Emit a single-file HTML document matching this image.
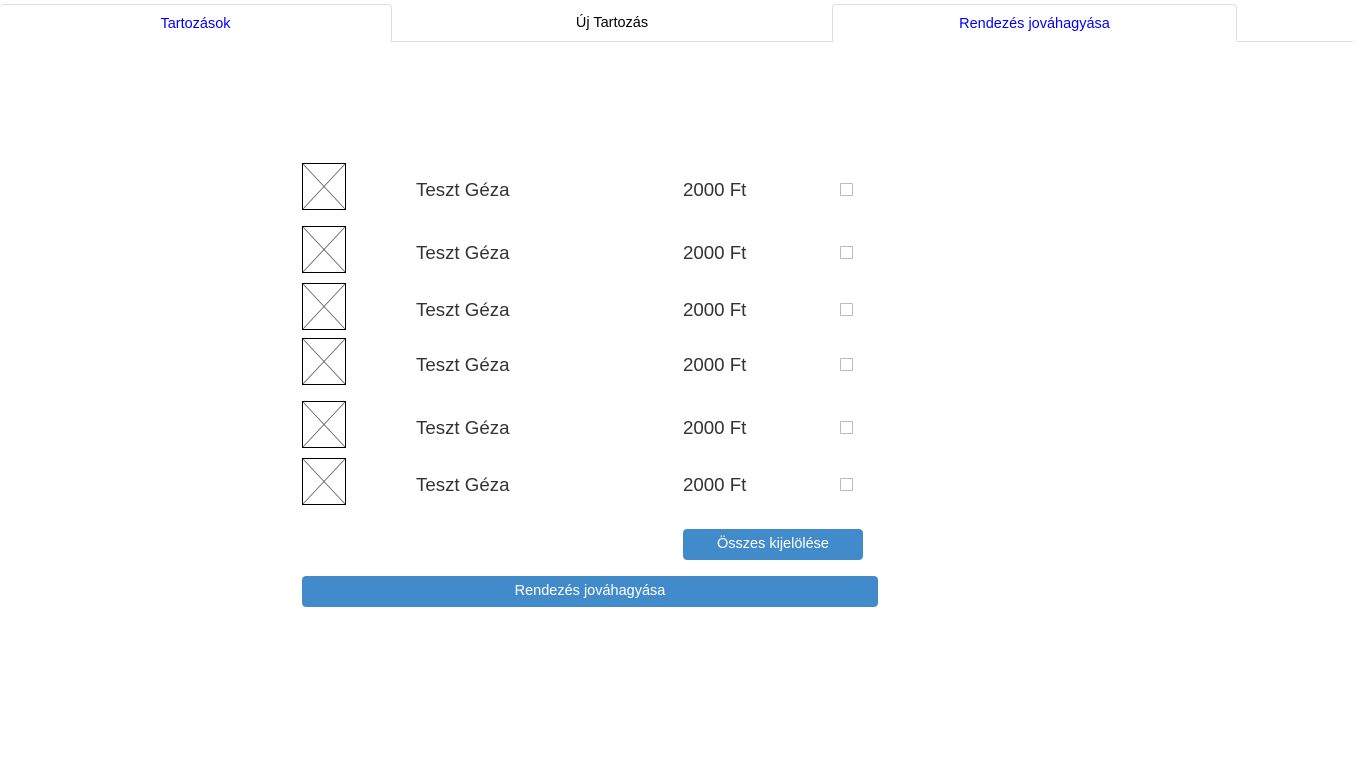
<!DOCTYPE html>
<html><head><meta charset="utf-8"><style>
body{margin:0;width:1366px;height:768px;background:#fff;font-family:"Liberation Sans",Arial,sans-serif;position:relative;overflow:hidden}
.tab{position:absolute;top:4px;height:37px;line-height:39px;text-align:center;font-size:14.5px;box-sizing:border-box}
.a{border:1px solid #ddd;border-bottom:none;border-radius:4px 4px 0 0;color:#00f;background:#fff}
.line{position:absolute;top:41px;height:1px;background:#ddd}
.img{position:absolute;left:302px;width:44px;height:47px}
.t{position:absolute;font-size:18.7px;color:#333;line-height:20px}
.cb{position:absolute;left:840px;width:11px;height:11px;border:1px solid #bbb;border-radius:1px}
.btn{position:absolute;background:#428bca;color:#fff;font-size:14.5px;text-align:center;border-radius:4px;height:31px;line-height:31px}
</style></head><body>
<div class="tab a" style="left:0;width:392px;border-left:none">Tartozások</div>
<div class="line" style="left:391px;width:442px"></div>
<div class="tab" style="left:391px;width:442px;color:#000">Új Tartozás</div>
<div class="tab a" style="left:832px;width:405px">Rendezés jováhagyása</div>
<div class="line" style="left:1237px;width:116px"></div>

<svg class="img" style="top:163px" viewBox="0 0 44 47"><rect x="0.5" y="0.5" width="43" height="46" fill="none" stroke="#000"/><path d="M1 1L43 46M43 1L1 46" stroke="#555" stroke-width="0.8"/></svg>
<svg class="img" style="top:226px" viewBox="0 0 44 47"><rect x="0.5" y="0.5" width="43" height="46" fill="none" stroke="#000"/><path d="M1 1L43 46M43 1L1 46" stroke="#555" stroke-width="0.8"/></svg>
<svg class="img" style="top:283px" viewBox="0 0 44 47"><rect x="0.5" y="0.5" width="43" height="46" fill="none" stroke="#000"/><path d="M1 1L43 46M43 1L1 46" stroke="#555" stroke-width="0.8"/></svg>
<svg class="img" style="top:338px" viewBox="0 0 44 47"><rect x="0.5" y="0.5" width="43" height="46" fill="none" stroke="#000"/><path d="M1 1L43 46M43 1L1 46" stroke="#555" stroke-width="0.8"/></svg>
<svg class="img" style="top:401px" viewBox="0 0 44 47"><rect x="0.5" y="0.5" width="43" height="46" fill="none" stroke="#000"/><path d="M1 1L43 46M43 1L1 46" stroke="#555" stroke-width="0.8"/></svg>
<svg class="img" style="top:458px" viewBox="0 0 44 47"><rect x="0.5" y="0.5" width="43" height="46" fill="none" stroke="#000"/><path d="M1 1L43 46M43 1L1 46" stroke="#555" stroke-width="0.8"/></svg>

<div class="t" style="left:416px;top:180px">Teszt Géza</div><div class="t" style="left:683px;top:180px">2000 Ft</div><div class="cb" style="top:183px"></div>
<div class="t" style="left:416px;top:243px">Teszt Géza</div><div class="t" style="left:683px;top:243px">2000 Ft</div><div class="cb" style="top:246px"></div>
<div class="t" style="left:416px;top:300px">Teszt Géza</div><div class="t" style="left:683px;top:300px">2000 Ft</div><div class="cb" style="top:303px"></div>
<div class="t" style="left:416px;top:355px">Teszt Géza</div><div class="t" style="left:683px;top:355px">2000 Ft</div><div class="cb" style="top:358px"></div>
<div class="t" style="left:416px;top:418px">Teszt Géza</div><div class="t" style="left:683px;top:418px">2000 Ft</div><div class="cb" style="top:421px"></div>
<div class="t" style="left:416px;top:475px">Teszt Géza</div><div class="t" style="left:683px;top:475px">2000 Ft</div><div class="cb" style="top:478px"></div>

<div class="btn" style="left:683px;top:529px;width:180px">Összes kijelölése</div>
<div class="btn" style="left:302px;top:576px;width:576px">Rendezés jováhagyása</div>
</body></html>
